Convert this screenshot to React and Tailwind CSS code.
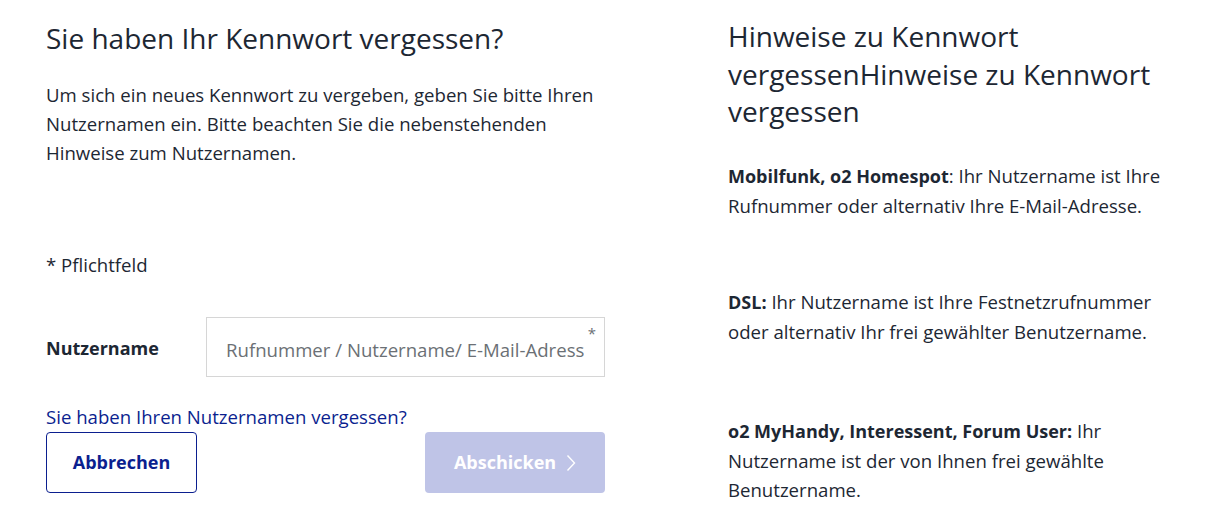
import React from "react";

const F = { fontFamily: "'Open Sans', 'Noto Sans', sans-serif" };

export default function App() {
  return (
    <div
      className="w-[1207px] h-[528px] bg-white text-[#1d2733] flex overflow-hidden"
      style={F}
    >
      <div className="w-[559px] ml-[46px] pt-[19px] flex flex-col">
        <h1 className="text-[28px] leading-[38px] font-normal">Sie haben Ihr Kennwort vergessen?</h1>
        <p className="mt-[23px] text-[18.6px] leading-[29px]">
          Um sich ein neues Kennwort zu vergeben, geben Sie bitte Ihren Nutzernamen ein. Bitte beachten Sie die nebenstehenden Hinweise zum Nutzernamen.
        </p>
        <p className="mt-[83px] text-[18.6px] leading-[29px]">* Pflichtfeld</p>
        <div className="mt-[38px] flex items-center">
          <label className="w-[160px] text-[18px] font-bold pt-[3px]">Nutzername</label>
          <div className="relative w-[399px] h-[60px] border border-[#d6d6d6] flex items-center">
            <input
              className="w-full pl-[19px] pr-[20px] pt-[6px] text-[18.6px] text-[#1d2733] placeholder:text-[#6b7075] outline-none bg-transparent"
              placeholder="Rufnummer / Nutzername/ E-Mail-Adresse"
              style={F}
            />
            <span className="absolute right-[8px] top-[8px] text-[15px] leading-none text-[#6b7075]">*</span>
          </div>
        </div>
        <a className="mt-[25px] text-[18.6px] leading-[29px] text-[#0b1f8f] w-fit" href="#">
          Sie haben Ihren Nutzernamen vergessen?
        </a>
        <div className="mt-[1px] flex justify-between">
          <button className="w-[151px] h-[61px] rounded-[4px] border border-[#0b1f8f] text-[#0b1f8f] text-[18px] font-bold" style={F}>
            Abbrechen
          </button>
          <button className="w-[180px] h-[61px] rounded-[4px] bg-[#bfc4e7] text-white text-[18px] font-bold flex items-center justify-center gap-[10px]" style={F}>
            Abschicken
            <svg width="10" height="18" viewBox="0 0 10 18" fill="none" stroke="white" strokeWidth="1.4">
              <path d="M1.5 1.5 L8.5 9 L1.5 16.5" />
            </svg>
          </button>
        </div>
      </div>
      <div className="ml-[123px] w-[445px] pt-[18px] flex flex-col">
        <h2 className="text-[28px] leading-[37.5px] font-normal">
          Hinweise zu Kennwort vergessenHinweise zu Kennwort vergessen
        </h2>
        <p className="mt-[30px] text-[18.6px] leading-[29px]">
          <b className="text-[18px]">Mobilfunk, o2 Homespot</b>: Ihr Nutzername ist Ihre Rufnummer oder alternativ Ihre E-Mail-Adresse.
        </p>
        <p className="mt-[67px] text-[18.6px] leading-[29px]">
          <b className="text-[18px]">DSL:</b> Ihr Nutzername ist Ihre Festnetzrufnummer oder alternativ Ihr frei gewählter Benutzername.
        </p>
        <p className="mt-[70px] text-[18.6px] leading-[29px]">
          <b className="text-[18px]">o2 MyHandy, Interessent, Forum User:</b> Ihr Nutzername ist der von Ihnen frei gewählte Benutzername.
        </p>
      </div>
    </div>
  );
}
